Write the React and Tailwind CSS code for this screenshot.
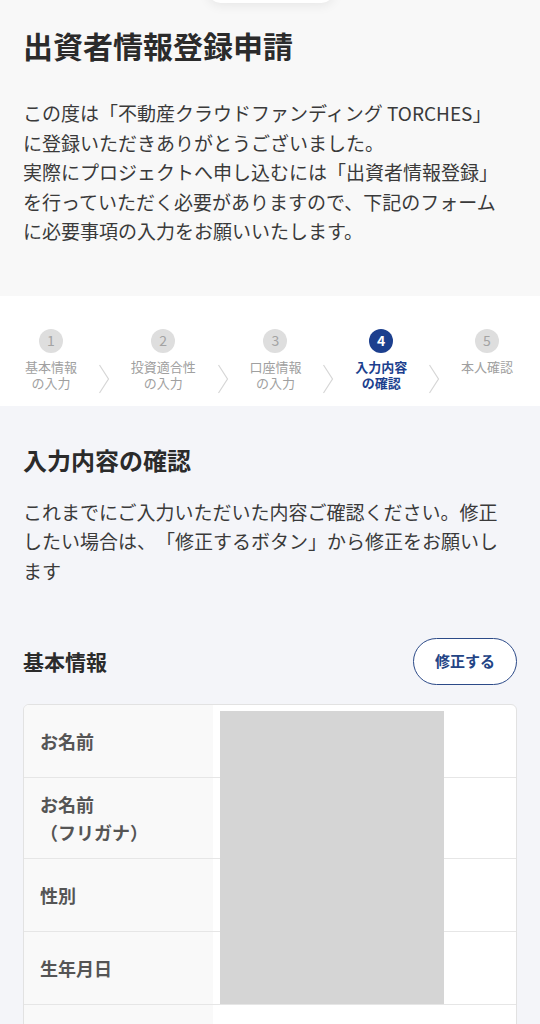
import React from "react";

const steps = [
  { no: 1, lines: ["基本情報", "の入力"] },
  { no: 2, lines: ["投資適合性", "の入力"] },
  { no: 3, lines: ["口座情報", "の入力"] },
  { no: 4, lines: ["入力内容", "の確認"], active: true },
  { no: 5, lines: ["本人確認"] },
];

const rows = [
  { label: ["お名前"] },
  { label: ["お名前", "（フリガナ）"] },
  { label: ["性別"] },
  { label: ["生年月日"] },
  { label: ["住所"] },
];

function Chevron() {
  return (
    <svg width="12" height="30" viewBox="0 0 12 30" className="mt-[35px] shrink-0">
      <polyline points="1.5,1 10.5,15 1.5,29" fill="none" stroke="#d6d6d6" strokeWidth="1.2" />
    </svg>
  );
}

function Step({ no, lines, active }) {
  return (
    <div className="flex flex-col items-center shrink-0">
      <div
        className={
          active
            ? "w-6 h-6 rounded-full bg-[#1c3f8e] text-white font-bold text-[14px] flex items-center justify-center"
            : "w-6 h-6 rounded-full bg-[#dedede] text-[#a3a3a3] text-[14px] flex items-center justify-center"
        }
      >
        {no}
      </div>
      <div
        className={
          active
            ? "mt-[6px] text-[13px] leading-[16px] text-center font-bold text-[#1c3f8e]"
            : "mt-[6px] text-[13px] leading-[16px] text-center text-[#a0a0a0]"
        }
      >
        {lines.map((l) => (
          <div key={l}>{l}</div>
        ))}
      </div>
    </div>
  );
}

export default function App() {
  return (
    <div className="relative min-h-screen overflow-hidden bg-[#f4f5f9] font-['Noto_Sans_CJK_JP',sans-serif] [text-spacing-trim:space-all]">
      {/* top pill from the browser chrome */}
      <div className="absolute left-[208px] top-[-22px] w-[126px] h-[25px] rounded-full bg-white shadow-[0_2px_12px_rgba(0,0,0,0.08)]" />

      {/* Intro */}
      <section className="bg-[#f8f8f8] px-[23px] pt-[25px] pb-[50px]">
        <h1 className="text-[30px] leading-[40px] font-bold text-[#2b2b2b]">出資者情報登録申請</h1>
        <p className="mt-[33px] text-[19px] leading-[29.5px] text-[#3a3a3a] whitespace-nowrap">
          この度は「不動産クラウドファンディング TORCHES」
          <br />
          に登録いただきありがとうございました。
          <br />
          実際にプロジェクトへ申し込むには「出資者情報登録」
          <br />
          を行っていただく必要がありますので、下記のフォーム
          <br />
          に必要事項の入力をお願いいたします。
        </p>
      </section>

      {/* Stepper */}
      <section className="bg-white pl-[25px] pr-[27px] pt-[33px] pb-[12px] flex justify-between items-start">
        {steps.map((s, i) => (
          <React.Fragment key={s.no}>
            {i > 0 && <Chevron />}
            <Step {...s} />
          </React.Fragment>
        ))}
      </section>

      {/* Confirmation */}
      <section className="px-[23px] pt-[38px]">
        <h2 className="text-[24px] leading-[32px] font-bold text-[#2b2b2b]">入力内容の確認</h2>
        <p className="mt-[21px] text-[19px] leading-[29.5px] text-[#3a3a3a] whitespace-nowrap">
          これまでにご入力いただいた内容ご確認ください。修正
          <br />
          したい場合は、「修正するボタン」から修正をお願いし
          <br />
          ます
        </p>

        <div className="mt-[53px] flex items-center justify-between">
          <h3 className="text-[21px] font-bold text-[#2b2b2b]">基本情報</h3>
          <button className="w-[104px] h-[47px] rounded-full border-[1.5px] border-[#2c4a88] bg-white text-[15px] font-bold text-[#234485]">
            修正する
          </button>
        </div>

        <div className="relative mt-[19px] rounded-[6px] border border-[#e2e2e2] bg-white overflow-hidden">
          {rows.map((r, i) => (
            <div key={i} className="flex border-b border-[#e6e6e6]">
              <div className="w-[189px] min-h-[72px] py-3 pl-[16px] bg-[#f9f9f9] flex flex-col justify-center text-[18px] leading-[28px] font-semibold text-[#555]">
                {r.label.map((l) => (
                  <div key={l}>{l}</div>
                ))}
              </div>
              <div className="flex-1" />
            </div>
          ))}
          {/* redacted values */}
          <div className="absolute left-[196px] top-[6px] w-[224px] h-[293px] bg-[#d5d5d5]" />
        </div>
      </section>
    </div>
  );
}
